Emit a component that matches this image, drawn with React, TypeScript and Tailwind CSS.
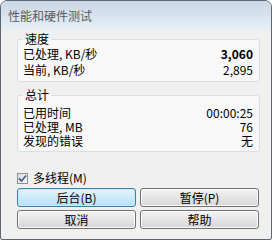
const font = { fontFamily: '"Noto Sans CJK SC", "Liberation Sans", sans-serif' };

const Row = ({ label, value, bold }: { label: string; value: string; bold?: boolean }) => (
  <div className="flex items-center justify-between pl-[5px] pr-[6px]">
    <span>{label}</span>
    <span className={bold ? 'font-bold' : ''}>{value}</span>
  </div>
);

const Button = ({ children, primary }: { children: React.ReactNode; primary?: boolean }) => (
  <button
    className={
      primary
        ? 'h-[19px] flex-1 rounded-[3px] border border-[#3c7fb1] bg-gradient-to-b from-[#e5f4fc] to-[#b6e0f6] text-[12px] leading-none text-black shadow-[inset_0_0_0_1px_#c6ebfc]'
        : 'h-[19px] flex-1 rounded-[3px] border border-[#707070] bg-gradient-to-b from-[#f4f4f4] to-[#d6d6d6] text-[12px] leading-none text-black shadow-[inset_0_0_0_1px_#fbfbfb]'
    }
  >
    {children}
  </button>
);

export default function App() {
  return (
    <div className="w-[274px] h-[244px] bg-white" style={font}>
      <div className="w-[272px] h-[240px] flex flex-col rounded-t-[7px] rounded-b-[2px] border border-[#5d6671] bg-[#f0f0f0] overflow-hidden">
        <div className="h-[29px] flex items-center pl-[7px] bg-gradient-to-b from-[#c8d6e6] to-[#e9eff6] text-[12px] text-[#5a5a5a]">
          性能和硬件测试
        </div>
        <div className="flex flex-col pl-[16px] pr-[11px] pt-[2px] text-[12px] text-black">
          <fieldset className="rounded-[3px] border border-[#d5dfe5] bg-[#f8f8f8] pb-[3px]">
            <legend className="ml-[5px] px-[2px] leading-[14px]">速度</legend>
            <div className="leading-[16px]">
              <Row label="已处理, KB/秒" value="3,060" bold />
              <Row label="当前, KB/秒" value="2,895" />
            </div>
          </fieldset>
          <fieldset className="mt-[6px] rounded-[3px] border border-[#d5dfe5] bg-[#f8f8f8] pb-[3px]">
            <legend className="ml-[5px] px-[2px] leading-[14px]">总计</legend>
            <div className="pt-[4px] leading-[14px]">
              <Row label="已用时间" value="00:00:25" />
              <Row label="已处理, MB" value="76" />
              <Row label="发现的错误" value="无" />
            </div>
          </fieldset>
          <label className="mt-[19px] flex items-center gap-[5px] leading-[14px]">
            <span className="flex h-[11px] w-[11px] items-center justify-center border border-[#8e8f8f] bg-gradient-to-br from-[#dcdcdc] to-[#fbfbfb]">
              <svg width="9" height="9" viewBox="0 0 9 9">
                <path d="M1 4.5 L3.5 7 L8 1.5" fill="none" stroke="#4a5f97" strokeWidth="1.8" />
              </svg>
            </span>
            多线程(M)
          </label>
          <div className="mt-[3px] flex flex-col gap-[3px] pr-[1px]">
            <div className="flex gap-[4px]">
              <Button primary>后台(B)</Button>
              <Button>暂停(P)</Button>
            </div>
            <div className="flex gap-[4px]">
              <Button>取消</Button>
              <Button>帮助</Button>
            </div>
          </div>
        </div>
      </div>
    </div>
  );
}
